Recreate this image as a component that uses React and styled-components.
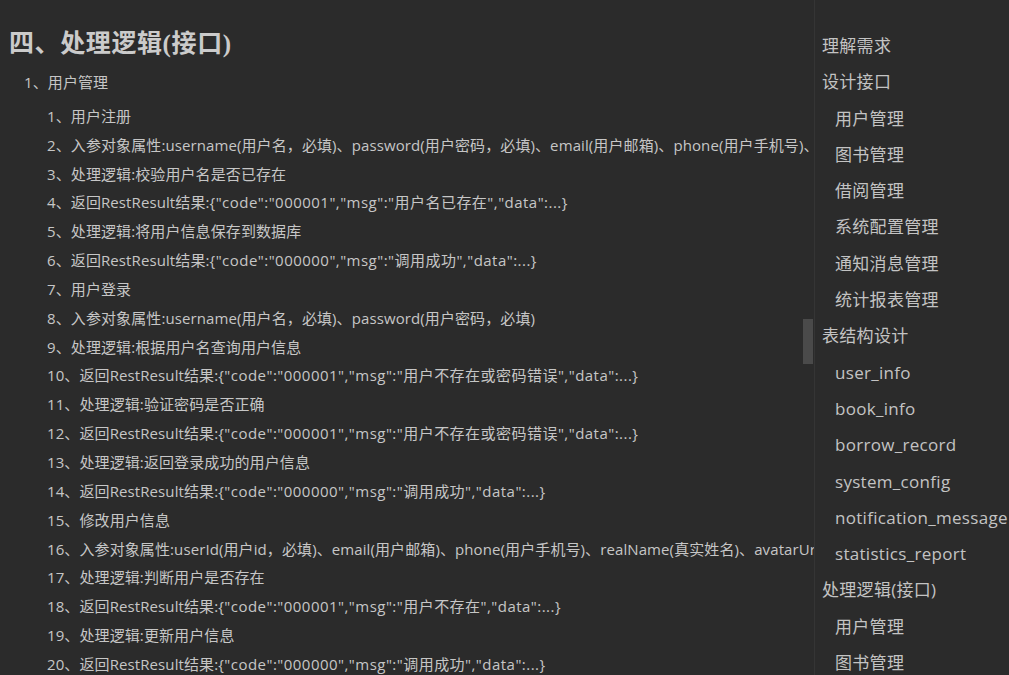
import React from "react";
import styled, { createGlobalStyle } from "styled-components";

const GlobalStyle = createGlobalStyle`
  html, body {
    margin: 0;
    padding: 0;
    background: #2b2b2b;
  }
  body {
    font-family: "Open Sans", "Noto Sans CJK SC", sans-serif;
  }
`;

const Page = styled.div`
  display: flex;
  width: 1009px;
  height: 675px;
  background: #2b2b2b;
  overflow: hidden;
`;

const Main = styled.div`
  position: relative;
  width: 814px;
  flex: none;
  height: 100%;
  overflow: hidden;
  padding-top: 26px;
  box-sizing: border-box;
`;

const Title = styled.h1`
  margin: 0 0 6px 0;
  padding-left: 9px;
  font-family: "Liberation Serif", "Noto Sans CJK SC", serif;
  font-weight: 600;
  font-size: 25px;
  line-height: 36px;
  letter-spacing: 0.6px;
  color: #cbcbcb;
  white-space: nowrap;
`;

const Section = styled.div`
  padding-left: ${(p) => p.$indent}px;
  margin-bottom: ${(p) => p.$gap || 0}px;
  font-size: 15px;
  line-height: 28.85px;
  letter-spacing: 0.1px;
  color: #c6c6c6;
  white-space: nowrap;
`;

const List = styled.div`
  display: flex;
  flex-direction: column;
  padding-left: 47px;
`;

const Item = styled.div`
  font-size: 15px;
  line-height: 28.85px;
  height: 28.85px;
  letter-spacing: 0.1px;
  color: #c6c6c6;
  white-space: nowrap;
`;

const Code = styled.span`
  letter-spacing: 0.47px;
`;

const ScrollThumb = styled.div`
  position: absolute;
  right: 1px;
  top: 319px;
  width: 10px;
  height: 45px;
  background: #4a4a4a;
`;

const Divider = styled.div`
  width: 1px;
  flex: none;
  background: #353535;
`;

const Sidebar = styled.nav`
  flex: 1;
  display: flex;
  flex-direction: column;
  padding-top: 28px;
  padding-left: 7px;
  overflow: hidden;
`;

const NavItem = styled.div`
  padding-left: ${(p) => (p.$level === 2 ? 13 : 0)}px;
  font-size: 17px;
  line-height: 36.3px;
  height: 36.3px;
  letter-spacing: 0.3px;
  color: #c3c3c3;
  white-space: nowrap;
`;

const items = [
  ["1、用户注册"],
  ["2、入参对象属性:username(用户名，必填)、password(用户密码，必填)、email(用户邮箱)、phone(用户手机号)、realName(真实姓名)"],
  ["3、处理逻辑:校验用户名是否已存在"],
  ["4、返回RestResult结果:", '{"code":"000001","msg":"用户名已存在","data":...}'],
  ["5、处理逻辑:将用户信息保存到数据库"],
  ["6、返回RestResult结果:", '{"code":"000000","msg":"调用成功","data":...}'],
  ["7、用户登录"],
  ["8、入参对象属性:username(用户名，必填)、password(用户密码，必填)"],
  ["9、处理逻辑:根据用户名查询用户信息"],
  ["10、返回RestResult结果:", '{"code":"000001","msg":"用户不存在或密码错误","data":...}'],
  ["11、处理逻辑:验证密码是否正确"],
  ["12、返回RestResult结果:", '{"code":"000001","msg":"用户不存在或密码错误","data":...}'],
  ["13、处理逻辑:返回登录成功的用户信息"],
  ["14、返回RestResult结果:", '{"code":"000000","msg":"调用成功","data":...}'],
  ["15、修改用户信息"],
  ["16、入参对象属性:userId(用户id，必填)、email(用户邮箱)、phone(用户手机号)、realName(真实姓名)、avatarUrl(头像地址)"],
  ["17、处理逻辑:判断用户是否存在"],
  ["18、返回RestResult结果:", '{"code":"000001","msg":"用户不存在","data":...}'],
  ["19、处理逻辑:更新用户信息"],
  ["20、返回RestResult结果:", '{"code":"000000","msg":"调用成功","data":...}'],
];

const nav = [
  { t: "理解需求", l: 1 },
  { t: "设计接口", l: 1 },
  { t: "用户管理", l: 2 },
  { t: "图书管理", l: 2 },
  { t: "借阅管理", l: 2 },
  { t: "系统配置管理", l: 2 },
  { t: "通知消息管理", l: 2 },
  { t: "统计报表管理", l: 2 },
  { t: "表结构设计", l: 1 },
  { t: "user_info", l: 2 },
  { t: "book_info", l: 2 },
  { t: "borrow_record", l: 2 },
  { t: "system_config", l: 2 },
  { t: "notification_message", l: 2 },
  { t: "statistics_report", l: 2 },
  { t: "处理逻辑(接口)", l: 1 },
  { t: "用户管理", l: 2 },
  { t: "图书管理", l: 2 },
];

export default function App() {
  return (
    <>
      <GlobalStyle />
      <Page>
        <Main>
          <Title>四、处理逻辑(接口)</Title>
          <Section $indent={24} $gap={5}>1、用户管理</Section>
          <List>
            {items.map(([text, code], i) => (
              <Item key={i}>
                {text}
                {code && <Code>{code}</Code>}
              </Item>
            ))}
          </List>
          <ScrollThumb />
        </Main>
        <Divider />
        <Sidebar>
          {nav.map((n, i) => (
            <NavItem key={i} $level={n.l}>
              {n.t}
            </NavItem>
          ))}
        </Sidebar>
      </Page>
    </>
  );
}
